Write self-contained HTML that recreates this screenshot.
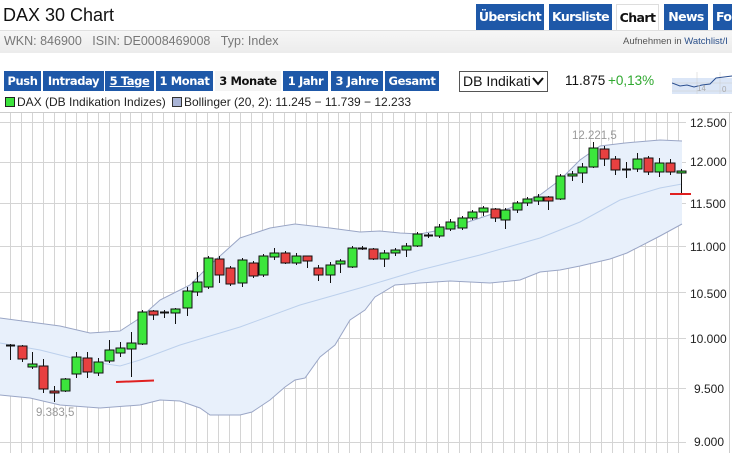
<!DOCTYPE html>
<html><head><meta charset="utf-8"><style>
body{margin:0;width:732px;height:453px;overflow:hidden;background:#fff;font-family:"Liberation Sans",Arial,sans-serif;position:relative}
.a{position:absolute}
.tab{position:absolute;top:4px;height:26px;background:#1e58a8;color:#fff;font:bold 12.5px "DejaVu Sans",sans-serif;line-height:26px;text-align:center;letter-spacing:-0.6px}
.btn{position:absolute;top:71px;height:20px;background:#1e58a8;color:#fff;font:bold 11.5px "DejaVu Sans",sans-serif;line-height:20px;text-align:center;letter-spacing:-0.4px}
</style></head><body>
<div class="a" style="left:3px;top:5px;font-size:18px;color:#111">DAX 30 Chart</div>
<div class="tab" style="left:476px;width:68px">Übersicht</div>
<div class="tab" style="left:549px;width:63px">Kursliste</div>
<div class="tab" style="left:616px;width:43px;top:4px;height:27px;background:#fff;color:#111;border:1px solid #ddd;border-bottom:none;box-sizing:border-box">Chart</div>
<div class="tab" style="left:664px;width:44px">News</div>
<div class="tab" style="left:713px;width:30px;text-align:left;padding-left:3px">Fo</div>
<div class="a" style="left:0;top:30px;width:732px;height:22px;background:linear-gradient(#f6f6f6,#ececec);border-top:1px solid #e0e0e0"></div>
<div class="a" style="left:4px;top:34px;font-size:12.5px;color:#777">WKN: 846900&nbsp;&nbsp;&nbsp;ISIN: DE0008469008&nbsp;&nbsp;&nbsp;Typ: Index</div>
<div class="a" style="left:623px;top:36px;font-size:9.5px;color:#555">Aufnehmen in <span style="color:#2a4f8a">Watchlist/I</span></div>
<div class="btn" style="left:4px;width:37px">Push</div>
<div class="btn" style="left:43px;width:61px">Intraday</div>
<div class="btn" style="left:105px;width:49px;text-decoration:underline">5 Tage</div>
<div class="btn" style="left:156px;width:57px">1 Monat</div>
<div class="btn" style="left:215px;width:66px;background:#f4f4f4;color:#111">3 Monate</div>
<div class="btn" style="left:283px;width:45px">1 Jahr</div>
<div class="btn" style="left:331px;width:52px">3 Jahre</div>
<div class="btn" style="left:385px;width:54px">Gesamt</div>
<div class="a" style="left:459px;top:71px;width:89px;height:21px;border:1px solid #555;box-sizing:border-box;font-size:14px;line-height:19px;padding-left:3px;color:#111">DB Indikati<svg style="position:absolute;right:3px;top:5px" width="12" height="9"><path d="M1 1L6 7L11 1" stroke="#111" stroke-width="2" fill="none"/></svg></div>
<div class="a" style="left:565px;top:73px;font-size:13.5px;color:#111">11.875</div>
<div class="a" style="left:608px;top:73px;font-size:13.5px;color:#2fa82f">+0,13%</div>
<svg class="a" style="left:672px;top:72px" width="60" height="22"><rect x="0" y="6" width="60" height="16" fill="#dbe6f7"/><path d="M0 11H60M0 19H60M25 0V22M48 0V22" stroke="#ccc" stroke-width=".5"/><path d="M0 11L8 14L15 13L22 15L30 13L38 12L44 6L52 5L60 4" stroke="#2b4f90" fill="none"/><text x="25" y="19" font-size="8" fill="#aaa">14</text><text x="50" y="20" font-size="8" fill="#aaa">0</text></svg>
<div class="a" style="left:5px;top:97px;width:8px;height:8px;background:#3ce33c;border:1px solid #222"></div>
<div class="a" style="left:17px;top:95px;font-size:12px;color:#222">DAX (DB Indikation Indizes)</div>
<div class="a" style="left:172px;top:97px;width:8px;height:8px;background:#a9b4d6;border:1px solid #333"></div>
<div class="a" style="left:184px;top:95px;font-size:12px;color:#222">Bollinger (20, 2): 11.245 − 11.739 − 12.233</div>
<svg class="a" style="left:0;top:0" width="732" height="453" id="c">
<line x1="0" y1="112.5" x2="732" y2="112.5" stroke="#ccc"/>
<line x1="729.5" y1="112" x2="729.5" y2="453" stroke="#ccc"/>
<g id="grid" stroke="#d4d4d4" stroke-width="1"></g>
<path id="band" fill="#e8f0fb" stroke="none"/>
<path id="up" fill="none" stroke="#9aa6c6"/>
<path id="lo" fill="none" stroke="#9aa6c6"/>
<path id="mid" fill="none" stroke="#bcd0ec"/>
<g id="cd"></g>
<line x1="116" y1="382" x2="154" y2="380.5" stroke="#e02020" stroke-width="2"/>
<line x1="670" y1="194" x2="691" y2="194" stroke="#e02020" stroke-width="2"/>
<text x="36" y="416" font-size="11.5" fill="#999" font-family="Liberation Sans">9.383,5</text>
<text x="572" y="139" font-size="11.5" fill="#999" font-family="Liberation Sans">12.221,5</text>
<g font-size="12" fill="#222" font-family="Liberation Sans">
<text x="690" y="127">12.500</text><text x="690" y="166">12.000</text><text x="690" y="208">11.500</text><text x="690" y="251">11.000</text><text x="690" y="298">10.500</text><text x="690" y="343">10.000</text><text x="694" y="393">9.500</text><text x="694" y="446">9.000</text>
</g>
</svg>
<script>
var g=document.getElementById('grid'),s='';
for(var x=10;x<=686;x+=10.95){s+='<line x1="'+(Math.round(x)+.5)+'" y1="113" x2="'+(Math.round(x)+.5)+'" y2="453"/>';}
[122,162,203,246,292,338,388,442].forEach(function(y){s+='<line x1="0" y1="'+(y+.5)+'" x2="686" y2="'+(y+.5)+'"/>';});
g.innerHTML=s;
var up=[[0,318],[30,322],[60,326],[90,333],[120,331],[140,318],[160,300],[190,285],[210,265],[240,238],[270,228],[295,224],[330,228],[360,232],[380,231],[400,233],[420,234],[450,228],[480,218],[510,208],[540,195],[560,180],[580,160],[600,146],[625,143],[660,140],[682,141]];
var lo=[[0,395],[30,398],[60,405],[100,408],[140,405],[160,400],[180,401],[200,408],[210,415],[240,415],[252,412],[270,400],[285,387],[295,380],[305,378],[320,357],[335,345],[350,320],[365,310],[375,297],[395,285],[420,283],[450,281],[470,282],[490,283],[520,280],[540,272],[560,270],[580,266],[610,259],[627,253],[660,236],[682,224]];
var mid=[[0,343],[40,350],[80,360],[120,366],[140,360],[180,345],[240,327],[300,305],[360,288],[420,270],[480,255],[540,238],[580,222],[620,200],[660,188],[682,184]];
function P(a){return a.map(function(p,i){return (i?'L':'M')+p[0]+' '+p[1]}).join('')}
document.getElementById('up').setAttribute('d',P(up));
document.getElementById('lo').setAttribute('d',P(lo));
document.getElementById('mid').setAttribute('d',P(mid));
document.getElementById('band').setAttribute('d',P(up)+'L'+lo.slice().reverse().map(function(p){return p[0]+' '+p[1]}).join('L')+'Z');
var C=[[10,345,345,344,360,'d'],[22,346,359,345,362,'r'],[32,364,367,352,369,'g'],[43,366,389,359,393,'r'],[54,391,393,386,402,'r'],[65,379,391,378,392,'g'],[76,357,374,352,378,'g'],[87,358,372,352,378,'r'],[98,362,373,358,376,'g'],[109,350,361,340,363,'g'],[120,348,353,342,357,'g'],[131,343,349,332,377,'g'],[142,312,344,310,345,'g'],[153,311,315,310,320,'r'],[164,312,312,310,318,'d'],[175,309,313,308,324,'g'],[187,291,308,287,316,'g'],[197,282,292,272,296,'g'],[208,258,287,256,289,'g'],[219,259,275,256,283,'r'],[230,268,284,266,286,'r'],[242,260,283,258,287,'g'],[253,263,276,261,278,'r'],[263,256,275,254,277,'g'],[274,253,257,248,260,'g'],[285,253,263,251,264,'r'],[296,256,263,253,265,'g'],[307,256,261,256,268,'r'],[318,268,275,265,281,'r'],[330,265,275,262,283,'g'],[340,261,264,259,273,'g'],[352,248,267,246,268,'g'],[362,248,248,246,250,'d'],[373,249,259,248,260,'r'],[384,253,259,250,267,'g'],[395,250,253,248,256,'g'],[406,246,250,243,257,'g'],[417,234,246,232,247,'g'],[428,235,236,233,238,'d'],[439,227,236,224,238,'g'],[450,222,229,219,231,'g'],[462,218,228,216,230,'g'],[472,212,218,210,220,'g'],[483,208,212,206,216,'g'],[495,209,218,208,222,'r'],[505,210,220,208,229,'g'],[517,203,210,201,213,'g'],[527,199,203,197,206,'g'],[538,197,201,194,205,'g'],[548,197,201,196,210,'r'],[560,176,199,174,200,'g'],[572,174,176,171,181,'g'],[582,167,173,163,183,'g'],[593,148,167,142,168,'g'],[604,149,159,146,166,'r'],[615,159,170,156,175,'r'],[626,169,169,162,178,'d'],[637,159,169,153,172,'g'],[648,158,172,156,175,'r'],[659,163,172,158,177,'g'],[670,163,172,159,175,'r'],[681,171,173,169,193,'g']];
var h='';
C.forEach(function(c){var x=c[0];h+='<line x1="'+(x+.5)+'" y1="'+c[3]+'" x2="'+(x+.5)+'" y2="'+c[4]+'" stroke="#111"/>';
if(c[5]=='d'){h+='<line x1="'+(x-4)+'" y1="'+(c[1]+.5)+'" x2="'+(x+5)+'" y2="'+(c[1]+.5)+'" stroke="#111" stroke-width="2"/>';}
else{var hh=Math.max(c[2]-c[1],2);h+='<rect x="'+(x-4)+'" y="'+c[1]+'" width="9" height="'+hh+'" fill="'+(c[5]=='g'?'#3ce63c':'#e84040')+'" stroke="#111" stroke-width="1"/>';}});
document.getElementById('cd').innerHTML=h;
</script>
</body></html>
